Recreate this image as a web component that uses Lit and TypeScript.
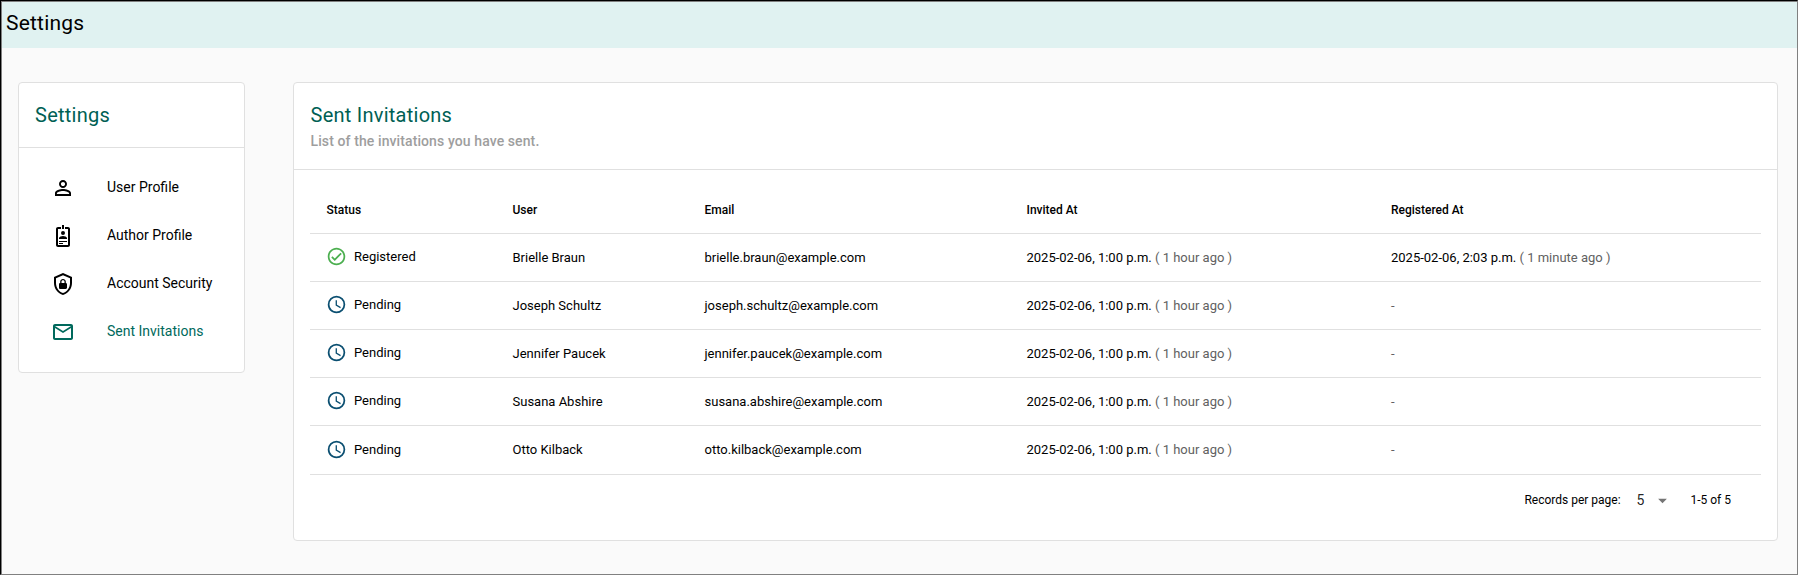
import { LitElement, html, css, svg } from "lit";
import { customElement } from "lit/decorators.js";
import { classMap } from "lit/directives/class-map.js";

const icons = {
  person: svg`<path d="M12 5.9c1.16 0 2.1.94 2.1 2.1s-.94 2.1-2.1 2.1S9.9 9.16 9.9 8s.94-2.1 2.1-2.1m0 9c2.97 0 6.1 1.46 6.1 2.1v1.1H5.9V17c0-.64 3.13-2.1 6.1-2.1M12 4C9.79 4 8 5.79 8 8s1.79 4 4 4 4-1.79 4-4-1.79-4-4-4zm0 9c-2.67 0-8 1.34-8 4v3h16v-3c0-2.66-5.33-4-8-4z"/>`,
  badge: svg`<path d="M12 7A2 2 0 0 1 14 9A2 2 0 0 1 12 11A2 2 0 0 1 10 9A2 2 0 0 1 12 7M16 15H8V14C8 12.67 10.67 12 12 12S16 12.67 16 14V15M16 18V17H8V18H16M12 20V19H8V20H12M19 5V21C19 22.11 18.11 23 17 23H7C5.9 23 5 22.11 5 21V5C5 3.9 5.9 3 7 3H10V5H7V21H17V5H14V3H17C18.11 3 19 3.9 19 5M13 5V1H11V5H13Z"/>`,
  shield: svg`<path d="M21 11C21 16.55 17.16 21.74 12 23C6.84 21.74 3 16.55 3 11V5L12 1L21 5V11M12 21C15.75 20 19 15.54 19 11.22V6.3L12 3.18L5 6.3V11.22C5 15.54 8.25 20 12 21M14.8 11V9.5C14.8 8.1 13.4 7 12 7S9.2 8.1 9.2 9.5V11C8.6 11 8 11.6 8 12.2V15.7C8 16.4 8.6 17 9.2 17H14.7C15.4 17 16 16.4 16 15.8V12.3C16 11.6 15.4 11 14.8 11M13.5 11H10.5V9.5C10.5 8.7 11.2 8.2 12 8.2S13.5 8.7 13.5 9.5V11Z"/>`,
  mail: svg`<path d="M22 6c0-1.100-.9-2-2-2H4c-1.100 0-2 .9-2 2v12c0 1.100.9 2 2 2h16c1.100 0 2-.9 2-2V6zm-2 0l-8 5-8-5h16zm0 12H4V8l8 5 8-5v10z"/>`,
  check: svg`<path d="M12 2C6.500 2 2 6.500 2 12S6.500 22 12 22 22 17.500 22 12 17.500 2 12 2M12 20C7.590 20 4 16.410 4 12S7.590 4 12 4 20 7.590 20 12 16.410 20 12 20M16.590 7.580L10 14.170L7.410 11.590L6 13L10 17L18 9L16.590 7.580Z"/>`,
  clock: svg`<path d="M12 20A8 8 0 0 0 20 12A8 8 0 0 0 12 4A8 8 0 0 0 4 12A8 8 0 0 0 12 20M12 2A10 10 0 0 1 22 12A10 10 0 0 1 12 22C6.470 22 2 17.500 2 12A10 10 0 0 1 12 2M12.500 7V12.250L17 14.920L16.250 16.150L11 13V7H12.500Z"/>`,
  caret: svg`<path d="M7 10l5 5 5-5z"/>`,
};

const icon = (name: keyof typeof icons, cls = "") =>
  html`<svg class="icon ${cls}" viewBox="0 0 24 24" aria-hidden="true">${icons[name]}</svg>`;

const nav: { icon: keyof typeof icons; label: string; active?: boolean }[] = [
  { icon: "person", label: "User Profile" },
  { icon: "badge", label: "Author Profile" },
  { icon: "shield", label: "Account Security" },
  { icon: "mail", label: "Sent Invitations", active: true },
];

const invited = { date: "2025-02-06, 1:00 p.m.", ago: "( 1 hour ago )" };
const rows = [
  { user: "Brielle Braun", email: "brielle.braun@example.com", registered: { date: "2025-02-06, 2:03 p.m.", ago: "( 1 minute ago )" } },
  { user: "Joseph Schultz", email: "joseph.schultz@example.com" },
  { user: "Jennifer Paucek", email: "jennifer.paucek@example.com" },
  { user: "Susana Abshire", email: "susana.abshire@example.com" },
  { user: "Otto Kilback", email: "otto.kilback@example.com" },
];

@customElement("app-root")
export class AppRoot extends LitElement {
  static styles = css`
    :host {
      display: flex;
      flex-direction: column;
      box-sizing: border-box;
      height: 575px;
      border: 1px solid #808080;
      border-top-color: #000;
      border-left-color: #000;
      background: #fafafa;
      color: #000;
      font-family: Roboto, "Liberation Sans", sans-serif;
      font-size: 14px;
    }
    * { box-sizing: border-box; }
    .frame {
      flex: 1;
      border-top: 1px solid #808080;
      border-left: 1px solid #808080;
    }
    .bar {
      height: 46px;
      padding: 0 4px;
      background: #e0f2f1;
      font-size: 21px;
      line-height: 42px;
      letter-spacing: 0.21px;
    }
    .layout {
      display: flex;
      align-items: flex-start;
      justify-content: space-between;
      padding: 34px 19px 0 16px;
    }
    .card {
      background: #fff;
      border: 1px solid #e0e0e0;
      border-radius: 4px;
    }
    .side { width: 227px; height: 291px; }
    .main { width: 1485px; height: 459px; }
    .head { padding: 16px; border-bottom: 1px solid #e0e0e0; }
    .side .head { height: 65px; }
    .main .head { height: 87px; padding-left: 16.500px; }
    .title {
      margin: 0;
      font-size: 20px;
      font-weight: 400;
      line-height: 32px;
      letter-spacing: 0.25px;
      color: #005f54;
    }
    .subtitle {
      font-weight: 500;
      line-height: 20px;
      letter-spacing: 0.1px;
      color: #9e9e9e;
    }
    .icon { display: block; fill: currentColor; }
    .nav { padding-top: 16px; }
    .link {
      display: flex;
      align-items: center;
      height: 48px;
      padding-left: 32px;
    }
    .link .icon { width: 24px; height: 24px; margin-right: 32px; }
    .link span { padding-bottom: 2px; }
    .link.active { color: #00695c; }
    .table { padding: 16px 16px 0; }
    .row {
      display: grid;
      grid-template-columns: 186px 192px 322.500px 364.500px 1fr;
      align-items: center;
      height: 48px;
      border-bottom: 1px solid #e0e0e0;
      font-size: 13px;
      line-height: 18px;
    }
    .row.last { height: 49px; padding-bottom: 1px; }
    .row > * { padding-left: 16px; white-space: pre; }
    .row > :nth-child(-n + 3) { padding-left: 16.500px; }
    .row.header { font-size: 12px; font-weight: 500; }
    .status { display: flex; align-items: center; height: 22px; margin-top: -2px; }
    .last .status { margin-top: 0; }
    .row > .status { padding-left: 16px; }
    .status .icon { width: 21px; height: 21px; margin-right: 7px; }
    .ok { color: #4caf50; }
    .wait { color: #0b4f71; }
    .muted { color: #616161; }
    .pager {
      display: flex;
      align-items: center;
      justify-content: flex-end;
      height: 50px;
      padding-right: 30px;
      font-size: 12px;
    }
    .count { margin: 0 7.500px 0 16px; font-size: 14px; color: rgba(0, 0, 0, 0.87); }
    .pager .icon { width: 21px; height: 21px; color: #757575; margin-right: 17.500px; }
  `;

  private stamp(v?: { date: string; ago: string }) {
    return v
      ? html`<div>${v.date} <span class="muted">${v.ago}</span></div>`
      : html`<div class="muted">-</div>`;
  }

  render() {
    return html`<div class="frame">
      <header class="bar">Settings</header>
      <div class="layout">
        <aside class="card side">
          <div class="head"><h2 class="title">Settings</h2></div>
          <nav class="nav">
            ${nav.map((n) => html`<div class=${classMap({ link: true, active: !!n.active })}>${icon(n.icon)}<span>${n.label}</span></div>`)}
          </nav>
        </aside>
        <main class="card main">
          <div class="head">
            <h2 class="title">Sent Invitations</h2>
            <div class="subtitle">List of the invitations you have sent.</div>
          </div>
          <div class="table">
            <div class="row header">
              <div>Status</div><div>User</div><div>Email</div><div>Invited At</div><div>Registered At</div>
            </div>
            ${rows.map((r, i) => html`<div class=${classMap({ row: true, last: i === rows.length - 1 })}>
              <div class="status">${r.registered ? icon("check", "ok") : icon("clock", "wait")}<span>${r.registered ? "Registered" : "Pending"}</span></div>
              <div>${r.user}</div>
              <div>${r.email}</div>
              ${this.stamp(invited)}
              ${this.stamp(r.registered)}
            </div>`)}
            <div class="pager">
              <span>Records per page:</span><span class="count">5</span>${icon("caret")}<span>1-5 of 5</span>
            </div>
          </div>
        </main>
      </div>
    </div>`;
  }
}
